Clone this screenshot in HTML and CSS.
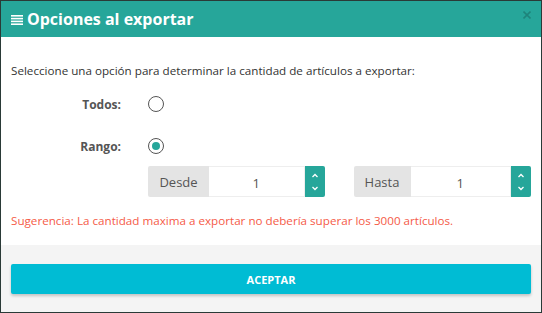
FILE: index.html
```html
<!DOCTYPE html>
<html lang="es">
<head>
<meta charset="utf-8">
<link rel="stylesheet" href="styles.css">
</head>
<body>
<div class="modal">
  <div class="modal-header">
    <svg class="bars" width="12" height="10" viewBox="0 0 12 10"><rect x="0" y="0" width="12" height="1.6" fill="#fff"/><rect x="0" y="2.8" width="12" height="1.6" fill="#fff"/><rect x="0" y="5.6" width="12" height="1.6" fill="#fff"/><rect x="0" y="8.4" width="12" height="1.6" fill="#fff"/></svg>
    <h4 class="title">Opciones al exportar</h4>
    <svg class="close" width="8" height="8" viewBox="0 0 8 8"><path d="M0.5 0.5 L7.5 7.5 M7.5 0.5 L0.5 7.5" stroke="rgba(0,0,0,0.2)" stroke-width="1.6"/></svg>
  </div>
  <div class="modal-body">
    <p class="intro">Seleccione una opción para determinar la cantidad de artículos a exportar:</p>
    <div class="opt-row">
      <span class="opt-label">Todos:</span>
      <span class="radio"></span>
    </div>
    <div class="opt-row">
      <span class="opt-label">Rango:</span>
      <span class="radio checked"></span>
    </div>
    <div class="range">
      <div class="group g1">
        <span class="addon">Desde</span>
        <span class="input">1</span>
        <span class="spin"><svg width="8" height="22" viewBox="0 0 8 22"><path d="M1.5 6 L4 3.5 L6.5 6" stroke="#fff" stroke-width="1.3" fill="none"/><path d="M1.5 16 L4 18.5 L6.5 16" stroke="#fff" stroke-width="1.3" fill="none"/></svg></span>
      </div>
      <div class="group g2">
        <span class="addon">Hasta</span>
        <span class="input">1</span>
        <span class="spin"><svg width="8" height="22" viewBox="0 0 8 22"><path d="M1.5 6 L4 3.5 L6.5 6" stroke="#fff" stroke-width="1.3" fill="none"/><path d="M1.5 16 L4 18.5 L6.5 16" stroke="#fff" stroke-width="1.3" fill="none"/></svg></span>
      </div>
    </div>
    <p class="hint">Sugerencia: La cantidad maxima a exportar no debería superar los 3000 artículos.</p>
  </div>
  <div class="modal-footer">
    <button class="btn">ACEPTAR</button>
  </div>
</div>
</body>
</html>
```
FILE: styles.css
```css
html, body { margin: 0; padding: 0; }
body {
  background: #2a3a37;
  width: 542px;
  height: 313px;
  padding: 1px;
  box-sizing: border-box;
  font-family: "Open Sans", sans-serif;
}
.modal {
  height: 311px;
  display: flex;
  flex-direction: column;
  background: #fff;
}
.modal-header {
  background: #26a69a;
  height: 36px;
  flex: none;
  display: flex;
  align-items: center;
  padding: 0 10px;
  position: relative;
}
.bars { margin-top: 1px; margin-right: 4px; }
.title {
  margin: 0;
  color: #fff;
  font-size: 16px;
  font-weight: 700;
}
.close {
  position: absolute;
  right: 10px;
  top: 10px;
}
.modal-body {
  flex: 1;
  padding: 0 10px;
}
.intro {
  margin: 26px 0 13px;
  font-size: 11.65px;
  color: #333;
}
.opt-row {
  display: flex;
  align-items: center;
  height: 26px;
  margin-bottom: 16px;
}
.opt-label {
  width: 137px;
  text-align: right;
  font-weight: 700;
  font-size: 12px;
  color: #555;
  padding-right: 27px;
  box-sizing: border-box;
}
.radio {
  width: 16px;
  height: 16px;
  border: 1px solid #555;
  border-radius: 50%;
  box-sizing: border-box;
  position: relative;
}
.radio.checked::after {
  content: "";
  position: absolute;
  left: 3px; top: 3px;
  width: 8px; height: 8px;
  border-radius: 50%;
  background: #26a69a;
}
.range {
  display: flex;
  margin-left: 137px;
  margin-top: -9px;
}
.group {
  display: flex;
  height: 31px;
}
.g1 { width: 177px; margin-right: 29px; }
.g2 { width: 178px; }
.addon {
  background: #e4e4e4;
  color: #555;
  font-size: 13px;
  display: flex;
  align-items: center;
  justify-content: center;
  border-radius: 2px 0 0 2px;
}
.g1 .addon { width: 61px; }
.g2 .addon { width: 57px; }
.input {
  flex: 1;
  border: 1px solid #eee;
  border-left: none;
  display: flex;
  align-items: center;
  justify-content: center;
  font-size: 13px;
  color: #555;
  padding-top: 2px;
}
.spin {
  width: 20px;
  background: #26a69a;
  display: flex;
  align-items: center;
  justify-content: center;
  border-radius: 0 2px 2px 0;
}
.hint {
  margin: 16px 0 0;
  font-size: 11.65px;
  color: #f55a47;
}
.modal-footer {
  flex: none;
  background: #f4f4f4;
  height: 67px;
  padding: 19px 10px 0;
  box-sizing: border-box;
}
.btn {
  width: 100%;
  height: 30px;
  border: none;
  border-radius: 2px;
  background: #00bcd4;
  color: #fff;
  font-family: "Open Sans", sans-serif;
  font-weight: 700;
  font-size: 11px;
  box-shadow: 0 2px 3px rgba(0,0,0,0.2);
}
```
